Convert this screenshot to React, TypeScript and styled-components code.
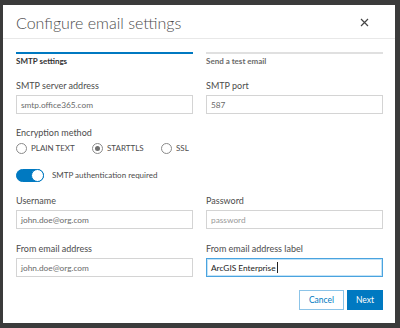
import React from 'react';
import styled, {createGlobalStyle} from "styled-components";

const GlobalStyle = createGlobalStyle`
  body {
    margin: 0;
    background: #3b3b3b;
    font-family: "Lato", "Open Sans", sans-serif;
  }
`;

const Backdrop = styled.div`
  width: 400px;
  height: 328px;
  padding: 5px 5px 0 3px;
  box-sizing: border-box;
  background: #3b3b3b;
`;

const Dialog = styled.div`
  width: 392px;
  height: 318px;
  background: #ffffff;
  display: flex;
  flex-direction: column;
  overflow: hidden;
`;

const Header = styled.div`
  height: 34px;
  flex-shrink: 0;
  box-sizing: border-box;
  border-bottom: 1px solid #e8e8e8;
  display: flex;
  align-items: center;
  justify-content: space-between;
  padding: 1px 26px 0 13px;
`;

const Title = styled.h1`
  margin: 0;
  font-size: 16px;
  font-weight: 300;
  color: #4c4c4c;
`;

const Body = styled.div`
  padding: 13px 12px 0 13px;
  display: flex;
  flex-direction: column;
`;

const Steps = styled.div`
  display: grid;
  grid-template-columns: 1fr 1fr;
  column-gap: 13px;
`;

const Step = styled.div<{ $active?: boolean }>`
  border-top: 2px solid ${p => p.$active ? "#0079c1" : "#e0e0e0"};
  padding-top: 2px;
  font-size: 8px;
  line-height: 10px;
  font-weight: 700;
  color: ${p => p.$active ? "#333" : "#6a6a6a"};
`;

const Grid = styled.div`
  display: grid;
  grid-template-columns: 1fr 1fr;
  column-gap: 13px;
`;

const Field = styled.div<{ $top?: number }>`
  display: flex;
  flex-direction: column;
  margin-top: ${p => p.$top ?? 0}px;
`;

const Label = styled.label`
  font-size: 9px;
  color: #4c4c4c;
  line-height: 13px;
  margin-bottom: 3px;
`;

const Input = styled.div<{ $focused?: boolean; $placeholder?: boolean }>`
  height: 19px;
  box-sizing: border-box;
  border: 1px solid ${p => p.$focused ? "#4aa3df" : "#d4d4d4"};
  box-shadow: ${p => p.$focused ? "inset 0 0 0 1px #c2e3f7" : "none"};
  font-size: 8.3px;
  color: ${p => p.$focused ? "#222" : p.$placeholder ? "#9a9a9a" : "#6a6a6a"};
  display: flex;
  align-items: center;
  padding-left: 4px;
`;

const Caret = styled.span`
  display: inline-block;
  width: 1px;
  height: 11px;
  background: #222;
  margin-left: 1px;
`;

const Radios = styled.div`
  display: flex;
  align-items: center;
  height: 12px;
`;

const RadioItem = styled.div<{ $width: number }>`
  display: flex;
  align-items: center;
  gap: 4px;
  width: ${p => p.$width}px;
  font-size: 8px;
  color: #4c4c4c;
`;

const RadioCircle = styled.span<{ $checked?: boolean }>`
  width: 9px;
  height: 9px;
  border-radius: 50%;
  border: 1px solid #8a8a8a;
  display: flex;
  align-items: center;
  justify-content: center;
  &::after {
    content: "";
    width: 5px;
    height: 5px;
    border-radius: 50%;
    background: ${p => p.$checked ? "#6f6f6f" : "transparent"};
  }
`;

const ToggleRow = styled.div`
  display: flex;
  align-items: center;
  gap: 8px;
  height: 14px;
  margin-top: 14px;
  font-size: 8px;
  color: #4c4c4c;
`;

const Toggle = styled.span`
  width: 26px;
  height: 11px;
  border-radius: 7px;
  background: #0079c1;
  border: 1px solid #0079c1;
  position: relative;
  &::after {
    content: "";
    position: absolute;
    right: -1px;
    top: -1px;
    width: 11px;
    height: 11px;
    border-radius: 50%;
    background: #fff;
    border: 1px solid #0079c1;
  }
`;

const Footer = styled.div`
  display: flex;
  justify-content: flex-end;
  gap: 3px;
  margin-top: 13px;
`;

const Button = styled.button<{ $primary?: boolean }>`
  height: 20px;
  width: ${p => p.$primary ? 36 : 45}px;
  padding: 0;
  font-family: inherit;
  font-size: 8.5px;
  border: 1px solid ${p => p.$primary ? "#0079c1" : "#8cc4e8"};
  background: ${p => p.$primary ? "#0079c1" : "#fff"};
  color: ${p => p.$primary ? "#fff" : "#0079c1"};
`;

const Close = () => (
    <svg width="9" height="9" viewBox="0 0 9 9">
        <path d="M1 1 L8 8 M8 1 L1 8" stroke="#444" strokeWidth="1.2"/>
    </svg>
);

const App = () => {
    return (
        <Backdrop>
            <GlobalStyle/>
            <Dialog>
                <Header>
                    <Title>Configure email settings</Title>
                    <Close/>
                </Header>
                <Body>
                    <Steps>
                        <Step $active>SMTP settings</Step>
                        <Step>Send a test email</Step>
                    </Steps>
                    <Grid>
                        <Field $top={13}>
                            <Label>SMTP server address</Label>
                            <Input>smtp.office365.com</Input>
                        </Field>
                        <Field $top={13}>
                            <Label>SMTP port</Label>
                            <Input>587</Input>
                        </Field>
                    </Grid>
                    <Field $top={12}>
                        <Label>Encryption method</Label>
                    </Field>
                    <Radios>
                        <RadioItem $width={76}><RadioCircle/>PLAIN TEXT</RadioItem>
                        <RadioItem $width={69}><RadioCircle $checked/>STARTTLS</RadioItem>
                        <RadioItem $width={40}><RadioCircle/>SSL</RadioItem>
                    </Radios>
                    <ToggleRow>
                        <Toggle/>
                        SMTP authentication required
                    </ToggleRow>
                    <Grid>
                        <Field $top={12}>
                            <Label>Username</Label>
                            <Input>john.doe@org.com</Input>
                        </Field>
                        <Field $top={12}>
                            <Label>Password</Label>
                            <Input $placeholder>password</Input>
                        </Field>
                        <Field $top={13}>
                            <Label>From email address</Label>
                            <Input>john.doe@org.com</Input>
                        </Field>
                        <Field $top={13}>
                            <Label>From email address label</Label>
                            <Input $focused>ArcGIS Enterprise<Caret/></Input>
                        </Field>
                    </Grid>
                    <Footer>
                        <Button>Cancel</Button>
                        <Button $primary>Next</Button>
                    </Footer>
                </Body>
            </Dialog>
        </Backdrop>
    );
};

export default App;
